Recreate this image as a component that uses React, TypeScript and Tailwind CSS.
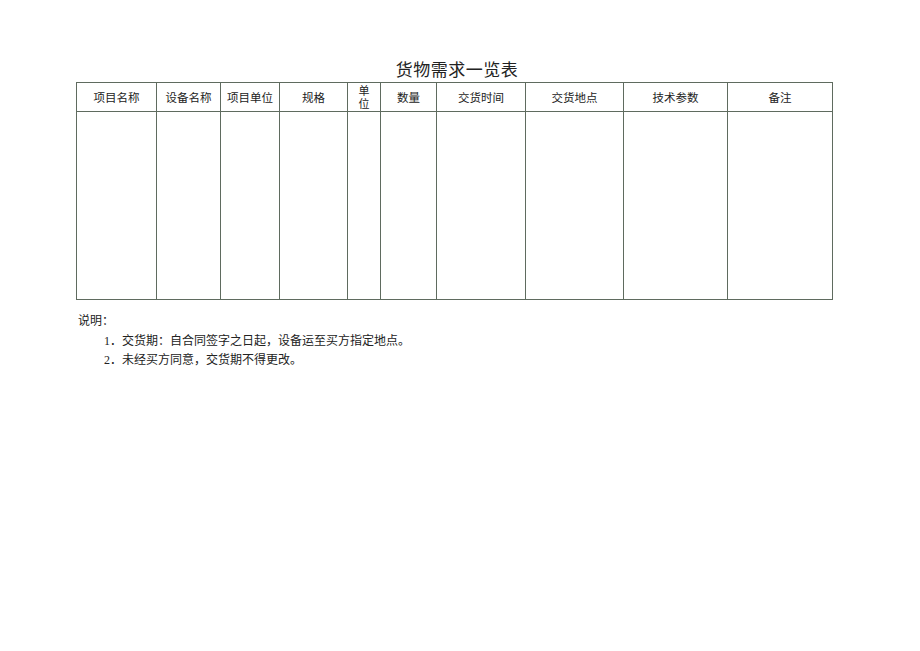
export default function App() {
  const columns = [
    { label: '项目名称', width: 'w-[80px]' },
    { label: '设备名称', width: 'w-[64px]' },
    { label: '项目单位', width: 'w-[59px]' },
    { label: '规格', width: 'w-[68px]' },
    { label: '单位', width: 'w-[33px]', stacked: true },
    { label: '数量', width: 'w-[56px]' },
    { label: '交货时间', width: 'w-[89px]' },
    { label: '交货地点', width: 'w-[98px]' },
    { label: '技术参数', width: 'w-[104px]' },
    { label: '备注', width: 'w-[105px]' },
  ]

  const notes = [
    '1．交货期：自合同签字之日起，设备运至买方指定地点。',
    '2．未经买方同意，交货期不得更改。',
  ]

  return (
    <div className="w-[920px] h-[651px] bg-white text-[#1a1a1a]">
      <div className="pt-[61px] pl-[76px]">
        {/* Title */}
        <h1 className="w-[762px] text-center text-[17px] leading-[20px] tracking-[0.5px] font-['Liberation_Serif','Noto_Sans_CJK_SC',serif] text-[#222]">
          货物需求一览表
        </h1>

        {/* Table */}
        <table className="mt-[1px] table-fixed border-collapse w-[757px] font-['Noto_Sans_CJK_SC',sans-serif]">
          <colgroup>
            {columns.map((col) => (
              <col key={col.label} className={col.width} />
            ))}
          </colgroup>
          <thead>
            <tr className="h-[29px]">
              {columns.map((col) => (
                <th
                  key={col.label}
                  className="border border-[#5f6b5f] p-0 text-[11.5px] font-normal text-[#222] text-center align-middle leading-[14px]"
                >
                  {col.stacked ? (
                    <span className="block mx-auto w-[12px] break-all text-[11px] leading-[13px]">
                      {col.label}
                    </span>
                  ) : (
                    col.label
                  )}
                </th>
              ))}
            </tr>
          </thead>
          <tbody>
            <tr className="h-[188px]">
              {columns.map((col) => (
                <td key={col.label} className="border border-[#5f6b5f] p-0" />
              ))}
            </tr>
          </tbody>
        </table>

        {/* Notes */}
        <div className="mt-[12px] text-[12px] leading-[19.5px] text-[#222] font-['Liberation_Serif','Noto_Sans_CJK_SC',serif]">
          <p className="ml-[2px]">说明：</p>
          <ul className="pl-[28px]">
            {notes.map((note) => (
              <li key={note}>{note}</li>
            ))}
          </ul>
        </div>
      </div>
    </div>
  )
}
